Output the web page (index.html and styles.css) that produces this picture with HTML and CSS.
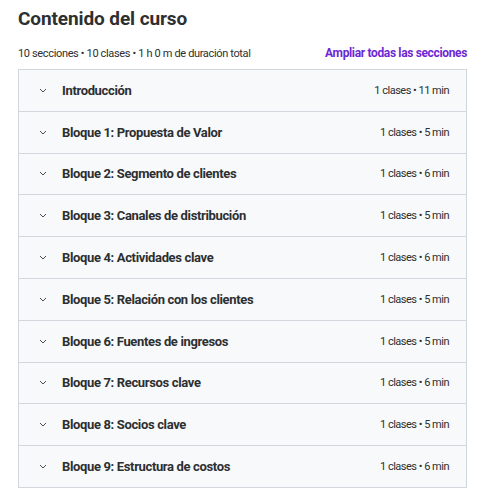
FILE: index.html
```html
<!DOCTYPE html>
<html lang="es">
<head>
  <meta charset="UTF-8" />
  <meta name="viewport" content="width=device-width, initial-scale=1.0" />
  <title>Contenido del curso</title>
  <link rel="stylesheet" href="styles.css">
</head>
<body>
  <h2 class="title">Contenido del curso</h2>

  <div class="summary">
    <span>10 secciones • 10 clases • 1 h 0 m de duración total</span>
    <button class="expand">Ampliar todas las secciones</button>
  </div>

  <div class="sections">
    <div class="section">
      <svg class="chevron" viewBox="0 0 8 5"><path d="M1 1l3 3 3-3" /></svg>
      <span class="name">Introducción</span>
      <span class="meta">1 clases • 11 min</span>
    </div>
    <div class="section">
      <svg class="chevron" viewBox="0 0 8 5"><path d="M1 1l3 3 3-3" /></svg>
      <span class="name">Bloque 1: Propuesta de Valor</span>
      <span class="meta">1 clases • 5 min</span>
    </div>
    <div class="section">
      <svg class="chevron" viewBox="0 0 8 5"><path d="M1 1l3 3 3-3" /></svg>
      <span class="name">Bloque 2: Segmento de clientes</span>
      <span class="meta">1 clases • 6 min</span>
    </div>
    <div class="section">
      <svg class="chevron" viewBox="0 0 8 5"><path d="M1 1l3 3 3-3" /></svg>
      <span class="name">Bloque 3: Canales de distribución</span>
      <span class="meta">1 clases • 5 min</span>
    </div>
    <div class="section">
      <svg class="chevron" viewBox="0 0 8 5"><path d="M1 1l3 3 3-3" /></svg>
      <span class="name">Bloque 4: Actividades clave</span>
      <span class="meta">1 clases • 6 min</span>
    </div>
    <div class="section">
      <svg class="chevron" viewBox="0 0 8 5"><path d="M1 1l3 3 3-3" /></svg>
      <span class="name">Bloque 5: Relación con los clientes</span>
      <span class="meta">1 clases • 5 min</span>
    </div>
    <div class="section">
      <svg class="chevron" viewBox="0 0 8 5"><path d="M1 1l3 3 3-3" /></svg>
      <span class="name">Bloque 6: Fuentes de ingresos</span>
      <span class="meta">1 clases • 5 min</span>
    </div>
    <div class="section">
      <svg class="chevron" viewBox="0 0 8 5"><path d="M1 1l3 3 3-3" /></svg>
      <span class="name">Bloque 7: Recursos clave</span>
      <span class="meta">1 clases • 6 min</span>
    </div>
    <div class="section">
      <svg class="chevron" viewBox="0 0 8 5"><path d="M1 1l3 3 3-3" /></svg>
      <span class="name">Bloque 8: Socios clave</span>
      <span class="meta">1 clases • 5 min</span>
    </div>
    <div class="section">
      <svg class="chevron" viewBox="0 0 8 5"><path d="M1 1l3 3 3-3" /></svg>
      <span class="name">Bloque 9: Estructura de costos</span>
      <span class="meta">1 clases • 6 min</span>
    </div>
  </div>
</body>
</html>
```

FILE: styles.css
```css
body {
  margin: 0;
  padding: 0 18px;
  font-family: Roboto, "Liberation Sans", sans-serif;
  color: #2d2f31;
  background-color: #ffffff;
}
.title {
  margin: 0;
  padding-top: 7px;
  font-size: 19px;
  line-height: 24px;
  font-weight: 700;
  letter-spacing: -0.1px;
}
.summary {
  display: flex;
  justify-content: space-between;
  align-items: center;
  margin-top: 14px;
  height: 16px;
  font-size: 11px;
  letter-spacing: -0.35px;
}
.expand {
  padding: 0;
  border: none;
  background: none;
  font-family: inherit;
  font-size: 12px;
  font-weight: 700;
  letter-spacing: -0.35px;
  color: #6d28d2;
  cursor: pointer;
}
.sections {
  margin-top: 8px;
  border: 1px solid #d1d7dc;
  border-bottom: none;
}
.section {
  display: flex;
  align-items: center;
  height: 40.8px;
  padding: 0 17px 0 20px;
  background-color: #f7f9fa;
  border-bottom: 1px solid #d1d7dc;
}
.chevron {
  width: 8px;
  height: 5px;
  fill: none;
  stroke: #4a4d50;
  stroke-width: 1;
}
.name {
  flex: 1;
  margin-left: 15px;
  font-size: 13px;
  font-weight: 700;
  letter-spacing: -0.35px;
}
.meta {
  font-size: 11px;
  letter-spacing: -0.5px;
}
```
